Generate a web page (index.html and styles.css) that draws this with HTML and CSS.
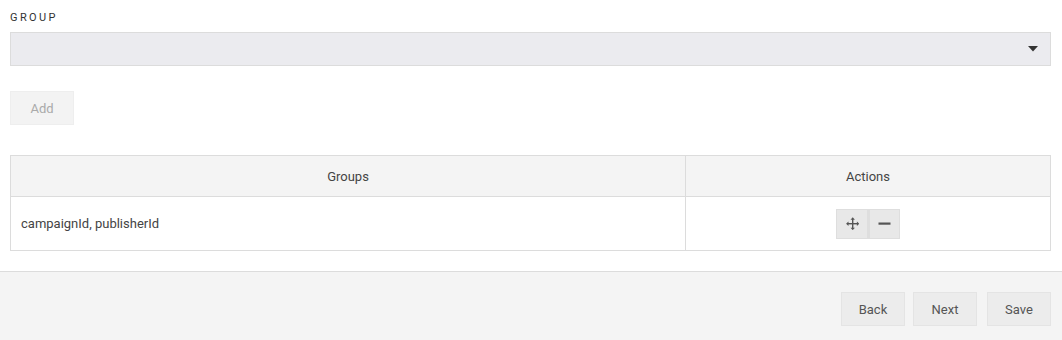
FILE: index.html
```html
<!DOCTYPE html>
<html>
<head>
<meta charset="utf-8">
<link rel="stylesheet" href="styles.css">
</head>
<body>
<div class="content">
  <div class="label">GROUP</div>
  <div class="select">
    <svg class="caret" width="10" height="6" viewBox="0 0 10 6"><path d="M0 0H10L5 5.5Z" fill="#333"/></svg>
  </div>
  <div class="add-row"><button class="btn add">Add</button></div>
  <table class="grid">
    <thead>
      <tr><th class="c-groups">Groups</th><th class="c-actions">Actions</th></tr>
    </thead>
    <tbody>
      <tr>
        <td class="c-groups">campaignId, publisherId</td>
        <td class="c-actions">
          <div class="acts">
            <button class="ibtn"><svg width="13" height="13" viewBox="0 0 13 13"><g fill="#555"><rect x="6" y="2" width="1.4" height="9"/><rect x="2" y="6" width="9" height="1.4"/><path d="M6.7 0.3L8.9 2.7H4.5Z"/><path d="M6.7 13.1L8.9 10.7H4.5Z"/><path d="M0.1 6.7L2.5 4.5V8.9Z"/><path d="M13.3 6.7L10.9 4.5V8.9Z"/></g></svg></button>
            <button class="ibtn"><svg width="13" height="13" viewBox="0 0 13 13"><rect x="0.5" y="5.5" width="12" height="2.2" fill="#555"/></svg></button>
          </div>
        </td>
      </tr>
    </tbody>
  </table>
</div>
<div class="footer">
  <button class="btn fbtn">Back</button>
  <button class="btn fbtn">Next</button>
  <button class="btn fbtn save">Save</button>
</div>
</body>
</html>
```
FILE: styles.css
```css
html, body { margin: 0; padding: 0; background: #fff; }
body { font-family: Roboto, "Liberation Sans", Arial, sans-serif; font-size: 13px; color: #444; }
.content { padding: 10px 11px 20px 10px; }
.label { font-size: 11px; line-height: 16px; letter-spacing: 2.4px; color: #333; margin-bottom: 6px; }
.select { height: 32px; background: #ebebef; border: 1px solid #dcdcdc; display: flex; align-items: center; justify-content: flex-end; padding-right: 12px; }
.caret { display: block; }
.add-row { margin-top: 25px; display: flex; }
.btn { font-family: inherit; font-size: 13px; border: 1px solid #e4e4e4; background: #ececec; color: #555; padding: 0; cursor: pointer; }
.add { width: 64px; height: 34px; background: #f3f3f3; border-color: #eeeeee; color: #aaa; }
.grid { margin-top: 30px; width: 100%; border-collapse: collapse; border: 1px solid #dcdcdc; }
.grid th { height: 40px; background: #f4f4f4; font-weight: normal; color: #444; border: 1px solid #dcdcdc; padding: 0 10px; }
.grid td { height: 53px; border: 1px solid #dcdcdc; padding: 0 10px; color: #444; }
.c-groups { width: 654px; text-align: left; }
th.c-groups { text-align: center; }
.c-actions { text-align: center; }
.acts { display: flex; justify-content: center; }
.ibtn { width: 32px; height: 30px; background: #e8e8e8; border: 1px solid #dedede; display: flex; align-items: center; justify-content: center; padding: 0; margin: 0; }
.ibtn + .ibtn { border-left: 2px solid #dedede; }
.footer { border-top: 1px solid #dcdcdc; background: #f4f4f4; height: 48px; padding: 20px 11px 0 0; display: flex; align-items: flex-start; justify-content: flex-end; gap: 8px; }
.fbtn { width: 64px; height: 34px; }
.save { margin-left: 2px; }
```
